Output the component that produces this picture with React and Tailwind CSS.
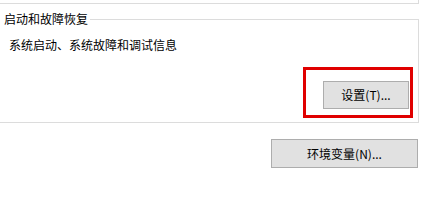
export default function App() {
  return (
    <div
      className="w-[432px] h-[202px] bg-white overflow-hidden text-[12px] leading-[16px] text-[#000]"
      style={{ fontFamily: '"Microsoft YaHei UI", "Noto Sans CJK SC", sans-serif' }}
    >
      {/* bottom edge of the group above */}
      <div className="w-[419px] h-[4px] border-r border-b border-[#dcdcdc]" />

      {/* 启动和故障恢复 group */}
      <div className="relative mt-[15px] w-[419px] h-[104px] border-t border-r border-b border-[#dcdcdc]">
        <span className="absolute left-0 top-[-9px] pl-[4px] pr-[2px] bg-white">启动和故障恢复</span>
        <p className="pl-[9px] pt-[17px]">系统启动、系统故障和调试信息</p>
        <div className="flex justify-end pr-[5px] mt-[14px]">
          <div className="w-[110px] h-[51px] border-[3px] border-[#e00000] flex items-end justify-end pr-[1px] pb-[6px]">
            <button className="w-[86px] h-[28px] bg-[#e1e1e1] border border-[#adadad] text-[12px]">
              设置(T)...
            </button>
          </div>
        </div>
      </div>

      <div className="flex mt-[16px] pl-[271px]">
        <button className="w-[147px] h-[29px] bg-[#e1e1e1] border border-[#adadad] text-[12px]">
          环境变量(N)...
        </button>
      </div>
    </div>
  );
}
